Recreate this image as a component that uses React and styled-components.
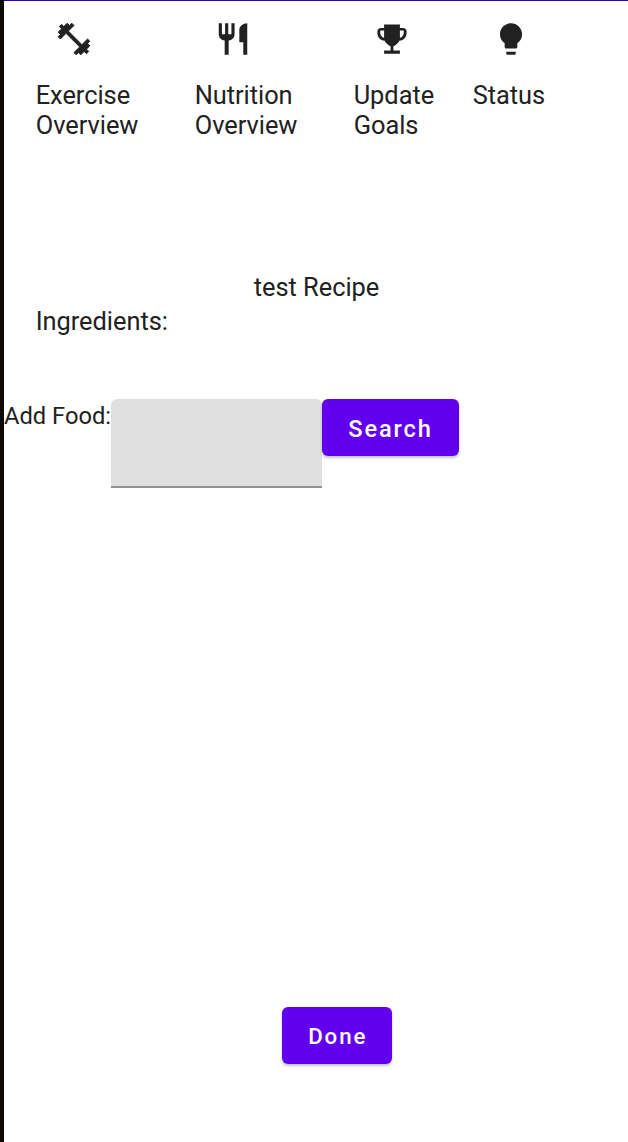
import React from "react";
import styled, { createGlobalStyle } from "styled-components";

const GlobalStyle = createGlobalStyle`
  * { box-sizing: border-box; }
  body { margin: 0; background: #fff; font-family: Roboto, sans-serif; color: #212121; }
`;

const Screen = styled.main`
  display: flex;
  flex-direction: column;
  height: 1142px;
  border-left: 4px solid #0d0907;
  overflow: hidden;
`;

const StatusEdge = styled.div`
  flex: none;
  height: 1px;
  background: #3700b3;
`;

const Nav = styled.nav`
  display: flex;
  height: 270px;
  padding-left: 31.7px;
`;

const NavItem = styled.div`
  display: flex;
  flex-direction: column;
  flex: none;
  width: ${(p) => p.$width}px;
`;

const IconButton = styled.button`
  display: flex;
  align-items: center;
  justify-content: center;
  width: 76px;
  height: 76px;
  padding: 0;
  border: 0;
  background: none;
  color: inherit;
`;

const Icon = styled.svg`
  width: 38px;
  height: 38px;
  fill: currentColor;
  stroke: currentColor;
  stroke-width: ${(p) => p.$weight || 0};
  stroke-linejoin: round;
`;

const BodyText = styled.span`
  font-size: 25.4px;
  letter-spacing: -0.03px;
  line-height: 30px;
  white-space: pre-line;
`;

const NavLabel = styled(BodyText)`
  margin-top: 3px;
`;

const Title = styled(BodyText)`
  margin-top: 1px;
  padding-left: 1px;
  align-self: center;
`;

const Ingredients = styled(BodyText)`
  margin: 4px 0 0 31.7px;
`;

const FoodRow = styled.div`
  display: flex;
  align-items: flex-start;
  margin-top: 63px;
`;

const FoodLabel = styled.label`
  width: 107px;
  padding-top: 2px;
  font-size: 23.7px;
  line-height: 30px;
  white-space: nowrap;
`;

const FoodInput = styled.input`
  width: 211px;
  height: 89px;
  padding: 0 25px;
  border: 0;
  border-bottom: 2px solid #929292;
  border-radius: 6px 6px 0 0;
  background: #e0e0e0;
  font: 25.4px Roboto, sans-serif;
  outline: none;
`;

const Button = styled.button`
  width: ${(p) => p.$width}px;
  height: 57px;
  padding: 2px 0 0;
  border: 0;
  border-radius: 6px;
  background: #6200ee;
  box-shadow: 0 2px 3px rgba(0, 0, 0, 0.24);
  color: #fff;
  font: 500 ${(p) => p.$size}px Roboto, sans-serif;
  letter-spacing: 1.9px;
`;

const DoneButton = styled(Button)`
  padding: 0 0 0 1.5px;
`;

const Footer = styled.footer`
  display: flex;
  margin: auto 0 78px 278px;
`;

const destinations = [
  {
    label: "Exercise\nOverview",
    width: 159,
    weight: 0.6,
    path: "M20.57 14.86L22 13.43 20.57 12 17 15.57 8.43 7 12 3.43 10.57 2 9.14 3.43 7.71 2 5.57 4.14 4.14 2.71 2.71 4.14l1.43 1.43L2 7.71l1.43 1.43L2 10.57 3.43 12 7 8.43 15.57 17 12 20.57 13.43 22l1.43-1.43L16.29 22l2.14-2.14 1.43 1.43 1.43-1.43-1.43-1.43L22 16.29z",
  },
  {
    label: "Nutrition\nOverview",
    width: 159,
    path: "M11 9H9V2H7v7H5V2H3v7c0 2.12 1.66 3.84 3.75 3.97V22h2.5v-9.03C11.34 12.84 13 11.12 13 9V2h-2v7zm5-3v8h2.5v8H21V2c-2.76 0-5 2.24-5 4z",
  },
  {
    label: "Update\nGoals",
    width: 119,
    path: "M17 5V2.8H7V5H4.8C3.7 5 2.8 5.9 2.8 7v1.3c0 2.5 1.8 4.5 4.4 4.7.8 1.5 2.1 2.9 3.9 3.6V19.3H7v2h10v-2h-4.1v-2.7c1.8-.7 3.1-2.1 3.9-3.6 2.6-.2 4.4-2.2 4.4-4.7V7c0-1.1-.9-2-2-2zM4.6 8.2V6.7H7v4.5c-1.4-.3-2.4-1.5-2.4-3zm14.8 0c0 1.5-1 2.7-2.4 3V6.7h2.4z",
  },
  {
    label: "Status",
    width: 119,
    path: "M9 20v1.2c0 .4.4.8.8.8h4.4c.4 0 .8-.4.8-.8V20zm3-18C8.14 2 5 5.14 5 9c0 2.38 1.19 4.47 3 5.74V17c0 .55.45 1 1 1h6c.55 0 1-.45 1-1v-2.26c1.81-1.27 3-3.36 3-5.74 0-3.86-3.14-7-7-7z",
  },
];

export default function App() {
  return (
    <Screen>
      <GlobalStyle />
      <StatusEdge />
      <Nav>
        {destinations.map((d) => (
          <NavItem key={d.label} $width={d.width}>
            <IconButton aria-label={d.label}>
              <Icon viewBox="0 0 24 24" $weight={d.weight}><path d={d.path} /></Icon>
            </IconButton>
            <NavLabel>{d.label}</NavLabel>
          </NavItem>
        ))}
      </Nav>
      <Title>test Recipe</Title>
      <Ingredients>Ingredients:</Ingredients>
      <FoodRow>
        <FoodLabel htmlFor="food">Add Food:</FoodLabel>
        <FoodInput id="food" />
        <Button $width={137} $size={23.6}>Search</Button>
      </FoodRow>
      <Footer>
        <DoneButton $width={110} $size={22.3}>Done</DoneButton>
      </Footer>
    </Screen>
  );
}
